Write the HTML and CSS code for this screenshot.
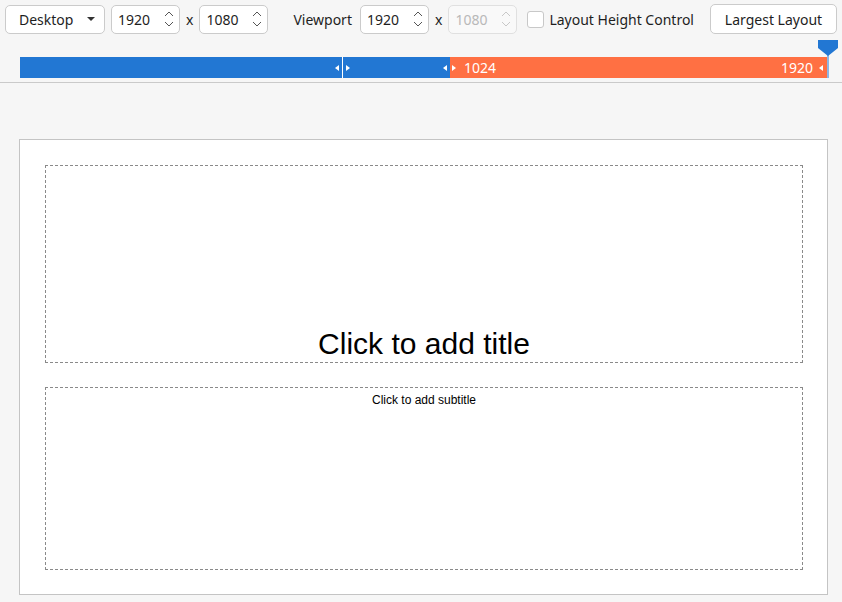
FILE: index.html
```html
<!DOCTYPE html>
<html>
<head>
<meta charset="utf-8">
<link rel="stylesheet" href="styles.css">
</head>
<body>
<div class="toolbar">
  <div class="select"><span>Desktop</span><span class="caret"></span></div>
  <div class="num"><span>1920</span><svg class="spin" width="10" height="18" viewBox="0 0 10 18"><path d="M1 6 L5 2 L9 6 M1 12 L5 16 L9 12" fill="none" stroke="#555" stroke-width="1"/></svg></div>
  <span class="times">x</span>
  <div class="num"><span>1080</span><svg class="spin" width="10" height="18" viewBox="0 0 10 18"><path d="M1 6 L5 2 L9 6 M1 12 L5 16 L9 12" fill="none" stroke="#555" stroke-width="1"/></svg></div>
  <span class="label">Viewport</span>
  <div class="num"><span>1920</span><svg class="spin" width="10" height="18" viewBox="0 0 10 18"><path d="M1 6 L5 2 L9 6 M1 12 L5 16 L9 12" fill="none" stroke="#555" stroke-width="1"/></svg></div>
  <span class="times">x</span>
  <div class="num disabled"><span>1080</span><svg class="spin" width="10" height="18" viewBox="0 0 10 18"><path d="M1 6 L5 2 L9 6 M1 12 L5 16 L9 12" fill="none" stroke="#c8c8c8" stroke-width="1"/></svg></div>
  <span class="check"></span>
  <span class="checklabel">Layout Height Control</span>
  <div class="btn">Largest Layout</div>
</div>
<div class="ruler">
  <div class="bar">
    <div class="seg blue s1"><span class="tri left"></span></div>
    <div class="seg blue s2"><span class="tri right"></span><span class="grow"></span><span class="tri left"></span></div>
    <div class="seg orange s3"><span class="tri right"></span><span class="val">1024</span><span class="grow"></span><span class="val">1920</span><span class="tri left"></span></div>
    <div class="marker"><svg width="20" height="38" viewBox="0 0 20 38"><path d="M0 0 H20 V8 L10 16 L0 8 Z" fill="#2277d3"/><rect x="9.5" y="15" width="1" height="23" fill="#2277d3"/></svg></div>
  </div>
</div>
<div class="stage">
  <div class="slide">
    <div class="ph title"><span>Click to add title</span></div>
    <div class="ph subtitle"><span>Click to add subtitle</span></div>
  </div>
</div>
</body>
</html>
```
FILE: styles.css
```css
* { box-sizing: border-box; }
html, body { margin: 0; padding: 0; }
body {
  width: 842px;
  height: 602px;
  background: #f6f6f6;
  font-family: "Noto Sans", "Open Sans", sans-serif;
  font-size: 14px;
  color: #1e1e1e;
  overflow: hidden;
}
.toolbar {
  display: flex;
  align-items: center;
  height: 38px;
  padding: 0 0 0 5px;
}
.select {
  width: 100px;
  height: 29px;
  border: 1px solid #cbcbcb;
  border-radius: 5px;
  background: #fff;
  display: flex;
  align-items: center;
  padding-left: 13px;
  padding-right: 9px;
  justify-content: space-between;
}
.caret {
  width: 0; height: 0;
  border-left: 4px solid transparent;
  border-right: 4px solid transparent;
  border-top: 4px solid #333;
}
.num {
  width: 69px;
  height: 29px;
  border: 1px solid #cbcbcb;
  border-radius: 5px;
  background: #fff;
  display: flex;
  align-items: center;
  justify-content: space-between;
  padding-left: 6px;
  padding-right: 5px;
  margin-left: 6px;
}
.num.disabled { border-color: #e0e0e0; color: #b8b8b8; background: #f9f9f9; }
.times { margin: 0 6px 0 6px; }
.times + .num { margin-left: 0; }
.label { margin-left: 25px; margin-right: 2px; }
.check {
  width: 17px; height: 17px;
  border: 1px solid #c8c8c8;
  border-radius: 3px;
  background: #fff;
  margin-left: 10px;
}
.checklabel { margin-left: 5px; }
.btn {
  margin-left: 16px;
  width: 127px;
  height: 30px;
  border: 1px solid #cbcbcb;
  border-radius: 5px;
  background: #fff;
  display: flex;
  align-items: center;
  justify-content: center;
}
.ruler {
  height: 45px;
  padding: 19px 0 0 20px;
  border-bottom: 1px solid #cacaca;
}
.bar {
  position: relative;
  display: flex;
  width: 807px;
  height: 21px;
}
.seg {
  display: flex;
  align-items: center;
  height: 21px;
  color: #fff;
}
.blue { background: #2277d3; }
.orange { background: #ff7043; }
.s1 { width: 323px; justify-content: flex-end; padding-right: 3px; border-right: 1px solid #fff; }
.s2 { width: 107px; padding: 0 3px; }
.s3 { flex: 1; padding: 0 4px 0 2px; }
.grow { flex: 1; }
.tri { width: 0; height: 0; border-top: 3.5px solid transparent; border-bottom: 3.5px solid transparent; }
.tri.left { border-right: 4px solid #fff; }
.tri.right { border-left: 4px solid #fff; }
.val { font-size: 14px; margin-left: 8px; margin-right: 6px; }
.s3 .val:first-of-type { margin-left: 7px; }
.marker {
  position: absolute;
  left: 798px;
  top: -17px;
  width: 20px;
  height: 38px;
}
.marker svg { display: block; }
.stage {
  padding: 56px 14px 0 19px;
}
.slide {
  width: 809px;
  height: 456px;
  background: #fff;
  border: 1px solid #c4c4c4;
  padding: 25px 24px 24px 25px;
  display: flex;
  flex-direction: column;
  gap: 24px;
  font-family: "Liberation Sans", Arial, sans-serif;
  color: #000;
}
.ph {
  border: 1px dashed #8a8a8a;
  display: flex;
  justify-content: center;
}
.title {
  height: 198px;
  align-items: flex-end;
  font-size: 30px;
  padding-bottom: 1px;
}
.subtitle {
  flex: 1;
  align-items: flex-start;
  font-size: 12px;
  padding-top: 5px;
}
```
